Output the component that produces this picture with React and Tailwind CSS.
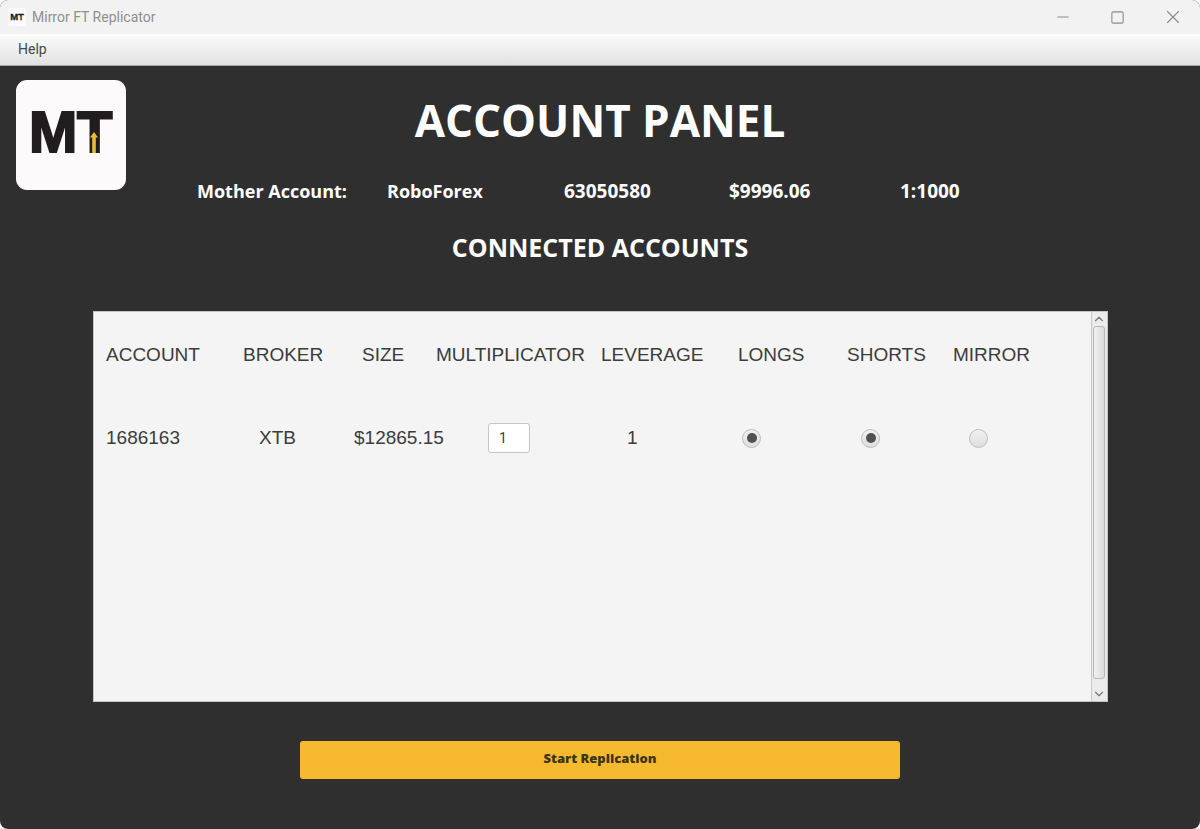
import React, { useState } from "react";
import { ChevronDown, ChevronUp, Minus, Square, X } from "lucide-react";

const motherAccount = ["63050580", "$9996.06", "1:1000"];

const columns = [
  { label: "ACCOUNT", width: "w-[149px]", pad: "pl-3" },
  { label: "BROKER", width: "w-[111px]", pad: "" },
  { label: "SIZE", width: "w-[82px]", pad: "pl-2" },
  { label: "MULTIPLICATOR", width: "w-[165px]", pad: "" },
  { label: "LEVERAGE", width: "w-[137px]", pad: "" },
  { label: "LONGS", width: "w-[109px]", pad: "" },
  { label: "SHORTS", width: "w-[106px]", pad: "" },
  { label: "MIRROR", width: "", pad: "" },
];

const initialAccounts = [
  {
    id: "1686163",
    broker: "XTB",
    size: "$12865.15",
    multiplicator: "1",
    leverage: "1",
    longs: true,
    shorts: true,
    mirror: false,
  },
];

function Logo({ className }) {
  return (
    <svg viewBox="0 0 110 110" className={className} role="img" aria-label="MT">
      <rect width="110" height="110" rx="11" fill="#fcfafa" />
      <g
        fontFamily="Liberation Sans, Arial, sans-serif"
        fontWeight="700"
        fontSize="58"
        fill="#211d1e"
        stroke="#211d1e"
        strokeWidth="2"
      >
        <text x="13" y="72">M</text>
        <text x="61" y="72">T</text>
      </g>
      {/* Arrow on the stem of the T */}
      <path d="M78 52l4 5.5h-2.2V73h-3.6V57.5H74z" fill="#eeb935" />
    </svg>
  );
}

function Radio({ name, label, checked, onToggle }) {
  return (
    <input
      type="radio"
      name={name}
      aria-label={label}
      checked={checked}
      onClick={onToggle}
      onChange={() => {}}
      className="flex size-[19px] appearance-none items-center justify-center rounded-full border border-[#bdbdbd] bg-linear-to-b from-[#f0f0f0] to-[#dedede] before:size-[10px] before:rounded-full checked:before:bg-[#505050]"
    />
  );
}

function ScrollBar() {
  return (
    <div className="flex w-4 flex-col border-l border-[#c8c8c8] bg-[#ebebeb] pr-px">
      <button type="button" aria-label="Scroll up" className="flex h-[14px] items-center justify-center text-[#777]">
        <ChevronUp size={16} strokeWidth={2} />
      </button>
      <div className="mx-px flex-1 rounded-[3px] border border-[#b8b8b8] bg-linear-to-r from-[#f2f2f2] to-[#dcdcdc]" />
      <div className="h-2" />
      <button type="button" aria-label="Scroll down" className="flex h-[14px] items-center justify-center text-[#777]">
        <ChevronDown size={16} strokeWidth={2} />
      </button>
    </div>
  );
}

export default function App() {
  const [accounts, setAccounts] = useState(initialAccounts);

  const update = (id, field, value) => {
    setAccounts((list) =>
      list.map((a) => (a.id === id ? { ...a, [field]: value } : a))
    );
  };

  return (
    <div className="flex min-h-screen flex-col overflow-hidden rounded-lg bg-[#2f2f2f] font-['Open_Sans',sans-serif]">
      {/* Title bar */}
      <div className="flex h-[34px] items-center bg-[#f2f2f2] pl-2">
        <Logo className="size-[18px]" />
        <span className="ml-1.5 flex-1 font-['Roboto',sans-serif] text-[14px] text-[#8f8f8f]">
          Mirror FT Replicator
        </span>
        <div className="flex items-center text-[#8a8a8a]">
          <button type="button" aria-label="Minimize" className="flex w-[55px] justify-center">
            <Minus size={18} strokeWidth={1.5} />
          </button>
          <button type="button" aria-label="Maximize" className="flex w-[55px] justify-center">
            <Square size={15} strokeWidth={1.75} />
          </button>
          <button type="button" aria-label="Close" className="flex w-[55px] justify-center">
            <X size={22} strokeWidth={1.25} />
          </button>
        </div>
      </div>

      {/* Menu bar */}
      <nav className="flex h-8 items-center border-b border-[#a8a8a8] bg-linear-to-b from-[#fbfbfb] to-[#e2e2e2] pl-[18px]">
        <button type="button" className="font-['Roboto',sans-serif] text-[14px] text-[#484848]">
          Help
        </button>
      </nav>

      <main className="flex flex-1 flex-col pb-[50px]">
        <header className="grid grid-cols-[110px_1fr_110px] items-start px-4 pt-[14px] text-white">
          <Logo className="size-[110px]" />
          <div className="pt-[10px]">
            <h1 className="text-center text-[44px] leading-[60px] font-bold">
              ACCOUNT PANEL
            </h1>
            <div className="mt-[27px] grid grid-cols-[190px_177px_165px_171px_1fr] items-baseline pl-[71px] text-[19px] leading-7 font-bold whitespace-nowrap">
              <span className="text-[18px]">Mother Account:</span>
              <span className="text-[18px]">RoboForex</span>
              {motherAccount.map((value) => (
                <span key={value}>{value}</span>
              ))}
            </div>
          </div>
        </header>

        <h2 className="mt-6 text-center text-[25px] leading-9 font-bold text-white">
          CONNECTED ACCOUNTS
        </h2>

        <section className="mr-[92px] ml-[93px] mt-[46px] flex flex-1 border border-[#c4c4c4] bg-[#f4f4f4]">
          <div className="flex-1 pt-[29px]">
            <table className="w-full table-fixed text-left font-['Liberation_Sans',Arial,sans-serif] text-[19px] leading-7 whitespace-nowrap text-[#3c3c3c]">
              <thead>
                <tr>
                  {columns.map((c) => (
                    <th key={c.label} className={`p-0 font-normal ${c.width} ${c.pad}`}>
                      {c.label}
                    </th>
                  ))}
                </tr>
              </thead>
              <tbody>
                {accounts.map((a) => (
                  <tr key={a.id} className="h-[138px]">
                    <td className="pl-3">{a.id}</td>
                    <td className="pl-4">{a.broker}</td>
                    <td>{a.size}</td>
                    <td className="pl-[52px]">
                      <input
                        type="text"
                        aria-label="Multiplicator"
                        value={a.multiplicator}
                        onChange={(e) => update(a.id, "multiplicator", e.target.value)}
                        className="block h-[30px] w-[42px] rounded-[3px] border border-[#c6c6c6] bg-white pl-[10px] font-['Roboto',sans-serif] text-[14px]"
                      />
                    </td>
                    <td className="pl-[26px]">{a.leverage}</td>
                    <td className="pl-1">
                      <Radio
                        name={`longs-${a.id}`}
                        label="Longs"
                        checked={a.longs}
                        onToggle={() => update(a.id, "longs", !a.longs)}
                      />
                    </td>
                    <td className="pl-[14px]">
                      <Radio
                        name={`shorts-${a.id}`}
                        label="Shorts"
                        checked={a.shorts}
                        onToggle={() => update(a.id, "shorts", !a.shorts)}
                      />
                    </td>
                    <td className="pl-4">
                      <Radio
                        name={`mirror-${a.id}`}
                        label="Mirror"
                        checked={a.mirror}
                        onToggle={() => update(a.id, "mirror", !a.mirror)}
                      />
                    </td>
                  </tr>
                ))}
              </tbody>
            </table>
          </div>
          <ScrollBar />
        </section>

        <button
          type="button"
          className="mx-auto mt-[39px] h-[38px] w-1/2 rounded-[3px] bg-[#f7b92f] pb-0.5 text-[13px] font-extrabold text-[#3a3418]"
        >
          Start Replication
        </button>
      </main>
    </div>
  );
}
